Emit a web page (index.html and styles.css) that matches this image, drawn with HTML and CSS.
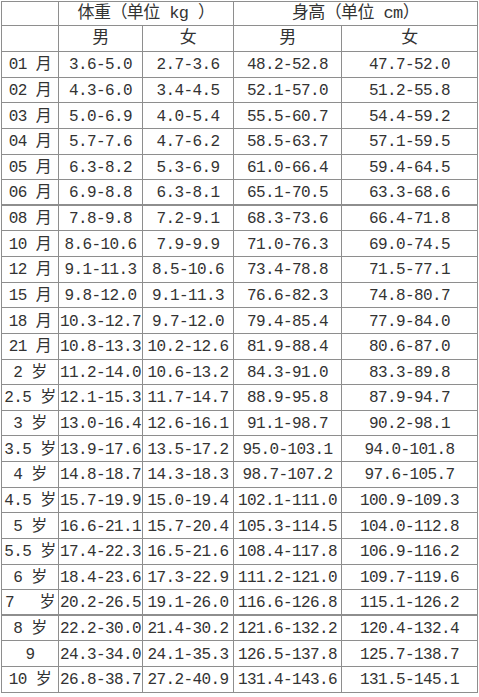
FILE: index.html
```html
<!DOCTYPE html>
<html lang="zh">
<head>
<meta charset="utf-8">
<title>体重身高表</title>
<link rel="stylesheet" href="styles.css">
</head>
<body>
<table class="chart">
  <colgroup>
    <col class="c1"><col class="c2"><col class="c3"><col class="c4"><col class="c5">
  </colgroup>
  <thead>
    <tr class="h1"><th></th><th colspan="2">体重（单位 kg ）</th><th colspan="2">身高（单位 cm）</th></tr>
    <tr class="h2"><th></th><th>男</th><th>女</th><th>男</th><th>女</th></tr>
  </thead>
  <tbody>
    <tr><td>01 月</td><td>3.6-5.0</td><td>2.7-3.6</td><td>48.2-52.8</td><td>47.7-52.0</td></tr>
    <tr><td>02 月</td><td>4.3-6.0</td><td>3.4-4.5</td><td>52.1-57.0</td><td>51.2-55.8</td></tr>
    <tr><td>03 月</td><td>5.0-6.9</td><td>4.0-5.4</td><td>55.5-60.7</td><td>54.4-59.2</td></tr>
    <tr><td>04 月</td><td>5.7-7.6</td><td>4.7-6.2</td><td>58.5-63.7</td><td>57.1-59.5</td></tr>
    <tr><td>05 月</td><td>6.3-8.2</td><td>5.3-6.9</td><td>61.0-66.4</td><td>59.4-64.5</td></tr>
    <tr class="thick"><td>06 月</td><td>6.9-8.8</td><td>6.3-8.1</td><td>65.1-70.5</td><td>63.3-68.6</td></tr>
    <tr><td>08 月</td><td>7.8-9.8</td><td>7.2-9.1</td><td>68.3-73.6</td><td>66.4-71.8</td></tr>
    <tr><td>10 月</td><td>8.6-10.6</td><td>7.9-9.9</td><td>71.0-76.3</td><td>69.0-74.5</td></tr>
    <tr><td>12 月</td><td>9.1-11.3</td><td>8.5-10.6</td><td>73.4-78.8</td><td>71.5-77.1</td></tr>
    <tr><td>15 月</td><td>9.8-12.0</td><td>9.1-11.3</td><td>76.6-82.3</td><td>74.8-80.7</td></tr>
    <tr><td>18 月</td><td>10.3-12.7</td><td>9.7-12.0</td><td>79.4-85.4</td><td>77.9-84.0</td></tr>
    <tr><td>21 月</td><td>10.8-13.3</td><td>10.2-12.6</td><td>81.9-88.4</td><td>80.6-87.0</td></tr>
    <tr><td>2 岁</td><td>11.2-14.0</td><td>10.6-13.2</td><td>84.3-91.0</td><td>83.3-89.8</td></tr>
    <tr><td>2.5 岁</td><td>12.1-15.3</td><td>11.7-14.7</td><td>88.9-95.8</td><td>87.9-94.7</td></tr>
    <tr><td>3 岁</td><td>13.0-16.4</td><td>12.6-16.1</td><td>91.1-98.7</td><td>90.2-98.1</td></tr>
    <tr><td>3.5 岁</td><td>13.9-17.6</td><td>13.5-17.2</td><td>95.0-103.1</td><td>94.0-101.8</td></tr>
    <tr><td>4 岁</td><td>14.8-18.7</td><td>14.3-18.3</td><td>98.7-107.2</td><td>97.6-105.7</td></tr>
    <tr><td>4.5 岁</td><td>15.7-19.9</td><td>15.0-19.4</td><td>102.1-111.0</td><td>100.9-109.3</td></tr>
    <tr><td>5 岁</td><td>16.6-21.1</td><td>15.7-20.4</td><td>105.3-114.5</td><td>104.0-112.8</td></tr>
    <tr><td>5.5 岁</td><td>17.4-22.3</td><td>16.5-21.6</td><td>108.4-117.8</td><td>106.9-116.2</td></tr>
    <tr><td>6 岁</td><td>18.4-23.6</td><td>17.3-22.9</td><td>111.2-121.0</td><td>109.7-119.6</td></tr>
    <tr class="thick"><td><span class="spread"><span>7</span><span>岁</span></span></td><td>20.2-26.5</td><td>19.1-26.0</td><td>116.6-126.8</td><td>115.1-126.2</td></tr>
    <tr><td>8 岁</td><td>22.2-30.0</td><td>21.4-30.2</td><td>121.6-132.2</td><td>120.4-132.4</td></tr>
    <tr><td>9</td><td>24.3-34.0</td><td>24.1-35.3</td><td>126.5-137.8</td><td>125.7-138.7</td></tr>
    <tr><td>10 岁</td><td>26.8-38.7</td><td>27.2-40.9</td><td>131.4-143.6</td><td>131.5-145.1</td></tr>
  </tbody>
</table>
</body>
</html>
```

FILE: styles.css
```css
html, body {
  margin: 0;
  padding: 0;
  background: #ffffff;
}

.chart {
  margin: 1px 0 0 1px;
  width: 476px;
  border-collapse: collapse;
  table-layout: fixed;
  font-family: "Liberation Mono", "Noto Sans CJK SC", monospace;
  font-size: 16px;
  letter-spacing: -0.6px;
  color: #333333;
}

.c1 { width: 57px; }
.c2 { width: 84px; }
.c3 { width: 91px; }
.c4 { width: 108px; }
.c5 { width: 136px; }

.chart th,
.chart td {
  border: 1px solid #8e8e8e;
  padding: 0;
  text-align: center;
  vertical-align: middle;
  white-space: nowrap;
  font-weight: normal;
  line-height: 18px;
}

.chart th {
  font-size: 17px;
}

.h1 { height: 24px; }
.h2 { height: 26px; }

.chart tbody tr { height: 25.64px; }

.chart tbody td { padding-top: 2px; }

.thick td { border-bottom: 2px solid #8e8e8e; }

.spread {
  display: flex;
  justify-content: space-between;
  padding: 0 3px 0 3px;
}
```
